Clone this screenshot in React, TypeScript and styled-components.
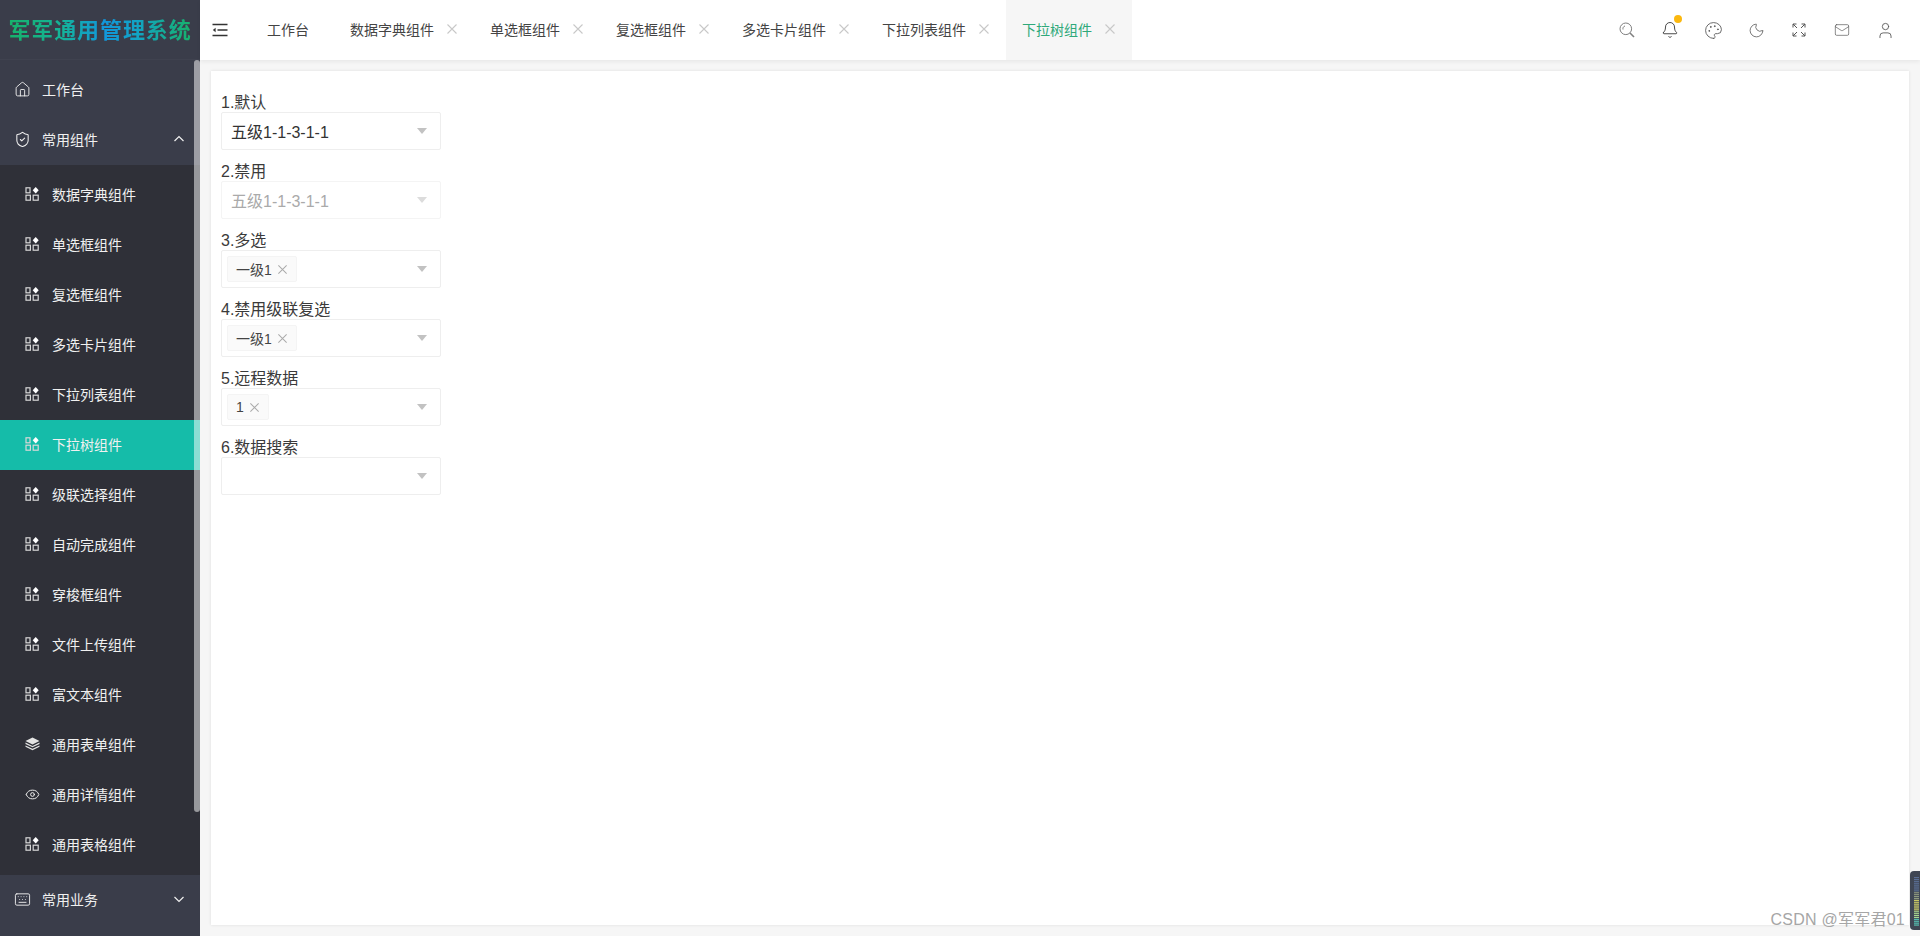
import React from 'react';
import styled, { createGlobalStyle } from 'styled-components';
import { Eye, Home, Keyboard, Mail, Moon, ShieldCheck, Palette, User, Bell } from 'lucide-react';

const GlobalStyle = createGlobalStyle`
  html, body {
    margin: 0;
    height: 100%;
    overflow: hidden;
    background: #f6f6f6;
    font-family: "Liberation Sans", "Noto Sans CJK SC", sans-serif;
    color: #333;
  }
  * { box-sizing: border-box; }
  svg { flex: none; }
`;

const Page = styled.div`
  display: flex;
  height: 936px;
  width: 1920px;
  position: relative;
`;

const Sidebar = styled.aside`
  background: #3a3d4a;
  display: flex;
  flex-direction: column;
  flex: none;
  height: 100%;
  position: relative;
  width: 200px;
`;

const Logo = styled.div`
  align-items: center;
  border-bottom: 1px solid #3f424f;
  display: flex;
  height: 60px;
  justify-content: center;
  padding-bottom: 3px;
`;

const LogoText = styled.span`
  background: linear-gradient(90deg, #17b26a 0%, #14b39b 30%, #1296db 52%, #12a3c4 70%, #17b26a 100%);
  -webkit-background-clip: text;
  background-clip: text;
  color: transparent;
  font-size: 22px;
  font-weight: 700;
  letter-spacing: .9px;
  white-space: nowrap;
`;

const Menu = styled.nav`
  display: flex;
  flex-direction: column;
  padding-top: 5px;
`;

const Row = styled.div<{ $child?: boolean; $active?: boolean }>`
  align-items: center;
  background: ${(p) => (p.$active ? '#15bca9' : 'transparent')};
  color: #f0f0f0;
  display: flex;
  flex: none;
  font-size: 14px;
  gap: 13px;
  height: 50px;
  padding-bottom: 2px;
  padding-left: ${(p) => (p.$child ? '25px' : '15px')};
  padding-right: 15px;
`;

const RowIcon = styled.span`
  align-items: center;
  display: flex;
  flex: none;
  height: 14px;
  justify-content: center;
  width: 14px;
`;

const RowLabel = styled.span`
  flex: 1;
`;

const Children = styled.div`
  background: #2f3038;
  display: flex;
  flex-direction: column;
  padding: 5px 0;
`;

const ScrollThumb = styled.div`
  background: rgba(255, 255, 255, .5);
  border-radius: 3px;
  height: 752px;
  position: absolute;
  right: 0;
  top: 60px;
  width: 6px;
`;

const Main = styled.div`
  display: flex;
  flex: 1;
  flex-direction: column;
  min-width: 0;
`;

const Header = styled.header`
  align-items: center;
  background: #fff;
  box-shadow: 0 2px 4px rgba(0, 0, 0, .06);
  display: flex;
  flex: none;
  height: 60px;
  padding-left: 12px;
  position: relative;
`;

const Toggle = styled.div`
  align-items: center;
  color: #333;
  display: flex;
  margin-right: 23px;
`;

const Tab = styled.div<{ $active?: boolean; $home?: boolean }>`
  align-items: center;
  background: ${(p) => (p.$active ? '#f6f6f6' : 'transparent')};
  color: ${(p) => (p.$active ? '#2fa97a' : '#444')};
  display: flex;
  font-size: 14px;
  gap: 12px;
  height: 60px;
  margin-right: ${(p) => (p.$home ? '9px' : '0')};
  padding: 0 16px 2px;
`;

const TabClose = styled.span`
  color: #c8c8c8;
  display: flex;
  flex: none;
`;

const Tools = styled.div`
  align-items: center;
  display: flex;
  gap: 25px;
  margin-left: auto;
  padding-right: 26px;
`;

const Tool = styled.div`
  align-items: center;
  color: #555;
  display: flex;
  height: 18px;
  justify-content: center;
  position: relative;
  width: 18px;
`;

const Dot = styled.span`
  background: #fbb80f;
  border-radius: 50%;
  height: 8px;
  position: absolute;
  right: -3px;
  top: -6px;
  width: 8px;
`;

const Content = styled.main`
  flex: 1;
  padding: 11px;
`;

const Card = styled.section`
  background: #fff;
  box-shadow: 0 0 3px rgba(0, 0, 0, .1);
  display: flex;
  flex-direction: column;
  height: 100%;
  padding: 10px;
`;

const Field = styled.div`
  display: flex;
  flex-direction: column;
  width: 220px;
`;

const Label = styled.label`
  color: #3a3a3a;
  display: block;
  font-size: 16px;
  line-height: 18px;
  margin-top: 13px;
`;

const Select = styled.div<{ $disabled?: boolean }>`
  align-items: center;
  border: 1px solid ${(p) => (p.$disabled ? '#f4f4f4' : '#eeeeee')};
  border-radius: 2px;
  color: ${(p) => (p.$disabled ? '#aaa' : '#333')};
  display: flex;
  font-size: 16px;
  height: 38px;
  justify-content: space-between;
  padding: 0 13px 0 9px;
`;

const TagSlot = styled.div`
  display: flex;
  margin-left: -4px;
`;

const Tag = styled.span`
  align-items: center;
  background: #fafafa;
  border: 1px solid #f4f4f4;
  border-radius: 2px;
  color: #444;
  display: flex;
  font-size: 14px;
  gap: 5px;
  height: 26px;
  padding: 0 8px;
`;

const TagClose = styled.span`
  color: #aaa;
  display: flex;
`;

const Caret = styled.span<{ $disabled?: boolean }>`
  border-left: 5.5px solid transparent;
  border-right: 5.5px solid transparent;
  border-top: 6px solid ${(p) => (p.$disabled ? '#dcdcdc' : '#c2c2c2')};
  height: 0;
  width: 0;
`;

const Watermark = styled.div`
  color: #a6a6a6;
  font-size: 16px;
  letter-spacing: .25px;
  position: absolute;
  right: 15px;
  top: 906px;
`;

const Meter = styled.svg`
  position: absolute;
  right: 0;
  top: 871px;
`;

const GridIcon: React.FC = () => (
  <svg width="14" height="14" viewBox="0 0 14 14" fill="none" stroke="#d8d8d8" strokeWidth="1.2">
    <rect x="1" y=".8" width="4" height="5" />
    <rect x="1" y="8.2" width="4.4" height="5" />
    <rect x="8.2" y="8.2" width="5" height="5" />
    <path d="M10.7 0l3 3.3-3 3.3-3-3.3z" fill="#fff" stroke="none" />
  </svg>
);

const StackIcon: React.FC = () => (
  <svg width="15" height="14" viewBox="0 0 15 14" fill="#e4e4e4">
    <path d="M7.5 .4l7 3.5-7 3.5-7-3.5z" />
    <path d="M.5 5.6l7 3.3 7-3.3v1.3l-7 3.3-7-3.3zM.5 8.4l7 3.3 7-3.3v1.3l-7 3.6-7-3.6z" />
  </svg>
);

const ToggleIcon: React.FC = () => (
  <svg width="16" height="14" viewBox="0 0 16 14" fill="none" stroke="currentColor" strokeWidth="1.5">
    <path d="M.5 1.5h15M5.5 7h10M.5 12.5h15" />
    <path d="M3.6 4.8L.8 7l2.8 2.2z" fill="currentColor" stroke="none" />
  </svg>
);

const ExpandIcon: React.FC = () => (
  <svg width="14" height="14" viewBox="0 0 14 14" fill="none" stroke="currentColor" strokeWidth="1">
    <path d="M1 4.5V1h3.5M1 1l4 4M13 4.5V1H9.5M13 1L9 5M1 9.5V13h3.5M1 13l4-4M13 9.5V13H9.5M13 13L9 9" />
  </svg>
);

const SearchIcon: React.FC = () => (
  <svg width="16" height="16" viewBox="0 0 16 16" fill="none" stroke="#808080" strokeWidth="1">
    <circle cx="6.8" cy="6.8" r="5.8" />
    <path d="M4 7.5C3.6 5.8 4.6 4.3 6 4" />
    <path d="M11 11l4 4" strokeWidth="1.6" />
  </svg>
);

const CloseIcon: React.FC<{ size: number }> = ({ size }) => (
  <svg width={size} height={size} viewBox="0 0 12 12" fill="none" stroke="currentColor" strokeWidth="1.1">
    <path d="M1.5 1.5l9 9M10.5 1.5l-9 9" />
  </svg>
);

const Chevron: React.FC<{ up?: boolean }> = ({ up }) => (
  <svg width="12" height="8" viewBox="0 0 12 8" fill="none" stroke="currentColor" strokeWidth="1.2">
    <path d={up ? 'M1.5 6l4.5-4.5L10.5 6' : 'M1.5 2l4.5 4.5L10.5 2'} />
  </svg>
);

const tabs = ['数据字典组件', '单选框组件', '复选框组件', '多选卡片组件', '下拉列表组件'];

const children: { name: string; icon: React.ReactNode; active?: boolean }[] = [
  { name: '数据字典组件', icon: <GridIcon /> },
  { name: '单选框组件', icon: <GridIcon /> },
  { name: '复选框组件', icon: <GridIcon /> },
  { name: '多选卡片组件', icon: <GridIcon /> },
  { name: '下拉列表组件', icon: <GridIcon /> },
  { name: '下拉树组件', icon: <GridIcon />, active: true },
  { name: '级联选择组件', icon: <GridIcon /> },
  { name: '自动完成组件', icon: <GridIcon /> },
  { name: '穿梭框组件', icon: <GridIcon /> },
  { name: '文件上传组件', icon: <GridIcon /> },
  { name: '富文本组件', icon: <GridIcon /> },
  { name: '通用表单组件', icon: <StackIcon /> },
  { name: '通用详情组件', icon: <Eye size={15} strokeWidth={1.6} /> },
  { name: '通用表格组件', icon: <GridIcon /> }
];

const fields: { label: string; value?: string; tag?: string; disabled?: boolean }[] = [
  { label: '1.默认', value: '五级1-1-3-1-1' },
  { label: '2.禁用', value: '五级1-1-3-1-1', disabled: true },
  { label: '3.多选', tag: '一级1' },
  { label: '4.禁用级联复选', tag: '一级1' },
  { label: '5.远程数据', tag: '1' },
  { label: '6.数据搜索' }
];

const meterColor = (i: number) => {
  if (i < 8) return '#5a6f96';
  if (i < 12) return '#8e9a80';
  if (i < 18) return '#d8d868';
  if (i < 22) return '#a8d890';
  return '#58c8b8';
};

const meterBars = Array.from({ length: 26 }, (_, i) => i);

const App: React.FC = () => (
  <Page>
    <GlobalStyle />
    <Sidebar>
      <Logo>
        <LogoText>军军通用管理系统</LogoText>
      </Logo>
      <Menu>
        <Row>
          <RowIcon><Home size={17} strokeWidth={1.3} /></RowIcon>
          <RowLabel>工作台</RowLabel>
        </Row>
        <Row>
          <RowIcon><ShieldCheck size={17} strokeWidth={1.5} /></RowIcon>
          <RowLabel>常用组件</RowLabel>
          <Chevron up />
        </Row>
        <Children>
          {children.map((item) => (
            <Row key={item.name} $child $active={item.active}>
              <RowIcon>{item.icon}</RowIcon>
              <RowLabel>{item.name}</RowLabel>
            </Row>
          ))}
        </Children>
        <Row>
          <RowIcon><Keyboard size={17} strokeWidth={1.3} /></RowIcon>
          <RowLabel>常用业务</RowLabel>
          <Chevron />
        </Row>
      </Menu>
      <ScrollThumb />
    </Sidebar>
    <Main>
      <Header>
        <Toggle>
          <ToggleIcon />
        </Toggle>
        <Tab $home>工作台</Tab>
        {tabs.map((name) => (
          <Tab key={name}>
            {name}
            <TabClose><CloseIcon size={12} /></TabClose>
          </Tab>
        ))}
        <Tab $active>
          下拉树组件
          <TabClose><CloseIcon size={12} /></TabClose>
        </Tab>
        <Tools>
          <Tool><SearchIcon /></Tool>
          <Tool>
            <Bell size={18} strokeWidth={1.1} color="#222" />
            <Dot />
          </Tool>
          <Tool><Palette size={19} strokeWidth={1.1} /></Tool>
          <Tool><Moon size={17} strokeWidth={1.1} /></Tool>
          <Tool><ExpandIcon /></Tool>
          <Tool><Mail size={16} strokeWidth={1} /></Tool>
          <Tool><User size={19} strokeWidth={1.1} /></Tool>
        </Tools>
      </Header>
      <Content>
        <Card>
          {fields.map((field) => (
            <Field key={field.label}>
              <Label>{field.label}</Label>
              <Select $disabled={field.disabled}>
                {field.tag ? (
                  <TagSlot>
                    <Tag>
                      {field.tag}
                      <TagClose><CloseIcon size={11} /></TagClose>
                    </Tag>
                  </TagSlot>
                ) : (
                  <span>{field.value}</span>
                )}
                <Caret $disabled={field.disabled} />
              </Select>
            </Field>
          ))}
        </Card>
      </Content>
    </Main>
    <Watermark>CSDN @军军君01</Watermark>
    <Meter width="10" height="59" viewBox="0 0 10 59">
      <rect x="0" y="0" width="14" height="59" rx="4" fill="#3f4654" />
      {meterBars.map((i) => (
        <rect key={i} x="4" y={6 + i * 1.9} width="5" height="1.1" fill={meterColor(i)} />
      ))}
    </Meter>
  </Page>
);

export default App;
